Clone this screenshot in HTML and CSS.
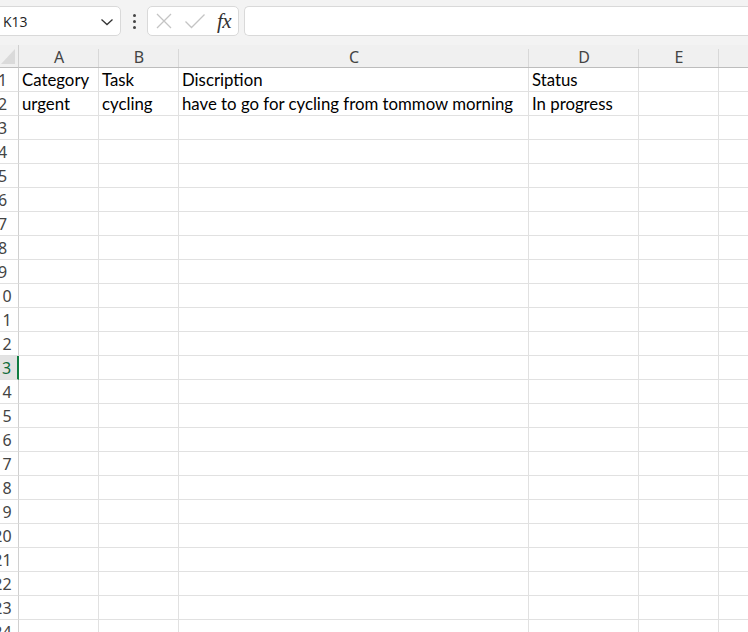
FILE: index.html
```html
<!DOCTYPE html>
<html>
<head>
<meta charset="utf-8">
<link rel="stylesheet" href="styles.css">
</head>
<body>
<div class="app">
  <div class="toolbar">
    <div class="namebox">
      <span class="name">K13</span>
      <svg class="chev" width="14" height="8" viewBox="0 0 14 8"><path d="M1.5 1.5 L7 6.5 L12.5 1.5" fill="none" stroke="#333" stroke-width="1.3"/></svg>
    </div>
    <div class="dots"><span></span><span></span><span></span></div>
    <div class="fxbox">
      <svg width="18" height="18" viewBox="0 0 18 18"><path d="M2 2 L16 16 M16 2 L2 16" stroke="#c4c4c4" stroke-width="1.3" fill="none"/></svg>
      <svg width="22" height="16" viewBox="0 0 22 16"><path d="M1.5 8.5 L7.5 14.5 L20.5 1.5" stroke="#c4c4c4" stroke-width="1.3" fill="none"/></svg>
      <span class="fx">fx</span>
    </div>
    <div class="formula"></div>
  </div>
  <div class="sheet">
    <div class="corner"><div class="tri"></div></div>
    <div class="ch">A</div><div class="ch">B</div><div class="ch">C</div><div class="ch">D</div><div class="ch">E</div><div class="ch last"></div>

    <div class="rh">1</div><div class="c">Category</div><div class="c">Task</div><div class="c">Discription</div><div class="c">Status</div><div class="c"></div><div class="c"></div>
    <div class="rh">2</div><div class="c">urgent</div><div class="c">cycling</div><div class="c">have to go for cycling from tommow morning</div><div class="c">In progress</div><div class="c"></div><div class="c"></div>
    <div class="rh">3</div><div class="c"></div><div class="c"></div><div class="c"></div><div class="c"></div><div class="c"></div><div class="c"></div>
    <div class="rh">4</div><div class="c"></div><div class="c"></div><div class="c"></div><div class="c"></div><div class="c"></div><div class="c"></div>
    <div class="rh">5</div><div class="c"></div><div class="c"></div><div class="c"></div><div class="c"></div><div class="c"></div><div class="c"></div>
    <div class="rh">6</div><div class="c"></div><div class="c"></div><div class="c"></div><div class="c"></div><div class="c"></div><div class="c"></div>
    <div class="rh">7</div><div class="c"></div><div class="c"></div><div class="c"></div><div class="c"></div><div class="c"></div><div class="c"></div>
    <div class="rh">8</div><div class="c"></div><div class="c"></div><div class="c"></div><div class="c"></div><div class="c"></div><div class="c"></div>
    <div class="rh">9</div><div class="c"></div><div class="c"></div><div class="c"></div><div class="c"></div><div class="c"></div><div class="c"></div>
    <div class="rh">10</div><div class="c"></div><div class="c"></div><div class="c"></div><div class="c"></div><div class="c"></div><div class="c"></div>
    <div class="rh">11</div><div class="c"></div><div class="c"></div><div class="c"></div><div class="c"></div><div class="c"></div><div class="c"></div>
    <div class="rh">12</div><div class="c"></div><div class="c"></div><div class="c"></div><div class="c"></div><div class="c"></div><div class="c"></div>
    <div class="rh sel">13</div><div class="c"></div><div class="c"></div><div class="c"></div><div class="c"></div><div class="c"></div><div class="c"></div>
    <div class="rh">14</div><div class="c"></div><div class="c"></div><div class="c"></div><div class="c"></div><div class="c"></div><div class="c"></div>
    <div class="rh">15</div><div class="c"></div><div class="c"></div><div class="c"></div><div class="c"></div><div class="c"></div><div class="c"></div>
    <div class="rh">16</div><div class="c"></div><div class="c"></div><div class="c"></div><div class="c"></div><div class="c"></div><div class="c"></div>
    <div class="rh">17</div><div class="c"></div><div class="c"></div><div class="c"></div><div class="c"></div><div class="c"></div><div class="c"></div>
    <div class="rh">18</div><div class="c"></div><div class="c"></div><div class="c"></div><div class="c"></div><div class="c"></div><div class="c"></div>
    <div class="rh">19</div><div class="c"></div><div class="c"></div><div class="c"></div><div class="c"></div><div class="c"></div><div class="c"></div>
    <div class="rh">20</div><div class="c"></div><div class="c"></div><div class="c"></div><div class="c"></div><div class="c"></div><div class="c"></div>
    <div class="rh">21</div><div class="c"></div><div class="c"></div><div class="c"></div><div class="c"></div><div class="c"></div><div class="c"></div>
    <div class="rh">22</div><div class="c"></div><div class="c"></div><div class="c"></div><div class="c"></div><div class="c"></div><div class="c"></div>
    <div class="rh">23</div><div class="c"></div><div class="c"></div><div class="c"></div><div class="c"></div><div class="c"></div><div class="c"></div>
    <div class="rh">24</div><div class="c"></div><div class="c"></div><div class="c"></div><div class="c"></div><div class="c"></div><div class="c"></div>
  </div>
</div>
</body>
</html>
```
FILE: styles.css
```css
html, body {
  margin: 0;
  padding: 0;
  width: 748px;
  height: 632px;
  overflow: hidden;
  background: #ffffff;
}
.app {
  width: 748px;
  height: 632px;
  overflow: hidden;
  background: #f3f3f3;
}
.toolbar {
  display: flex;
  align-items: center;
  height: 42px;
  box-sizing: border-box;
}
.namebox {
  margin-left: -10px;
  width: 131px;
  height: 30px;
  box-sizing: border-box;
  background: #fff;
  border: 1px solid #d9d9d9;
  border-radius: 5px;
  display: flex;
  align-items: center;
  justify-content: space-between;
  padding: 0 6px 0 12px;
}
.name {
  font-family: "Open Sans", "Noto Sans", sans-serif;
  font-size: 14px;
  color: #222;
}
.chev { margin-top: 1px; }
.dots {
  width: 26px;
  display: flex;
  flex-direction: column;
  align-items: center;
  gap: 3px;
}
.dots span {
  width: 3px;
  height: 3px;
  background: #444;
  border-radius: 50%;
}
.fxbox {
  width: 92px;
  height: 30px;
  box-sizing: border-box;
  background: #fff;
  border: 1px solid #d9d9d9;
  border-radius: 5px;
  display: flex;
  align-items: center;
  padding: 0 6px 0 7px;
  gap: 11px;
}
.fx {
  font-family: "Liberation Serif", "DejaVu Serif", serif;
  font-style: italic;
  font-size: 21px;
  color: #333;
  letter-spacing: -0.5px;
}
.formula {
  margin-left: 5px;
  flex: 1;
  height: 30px;
  background: #fff;
  border: 1px solid #d9d9d9;
  border-right: none;
  border-radius: 5px 0 0 5px;
  box-sizing: border-box;
}
.sheet {
  margin-top: 3px;
  margin-left: -13px;
  display: grid;
  grid-template-columns: 32px 80px 80px 350px 110px 80px 100px;
  grid-template-rows: 23px repeat(24, 24px);
  background: #fff;
}
.corner {
  background: #f0f0f0;
  border-right: 1px solid #d0d0d0;
  border-bottom: 1px solid #bdbdbd;
  box-sizing: border-box;
  display: flex;
  align-items: flex-end;
  justify-content: flex-end;
  padding: 0 3px 3px 0;
}
.tri {
  width: 0;
  height: 0;
  border-left: 14px solid transparent;
  border-bottom: 15px solid #dadada;
}
.ch {
  background: #f0f0f0;
  border-bottom: 1px solid #bdbdbd;
  box-sizing: border-box;
  font-family: "Noto Sans", "Open Sans", sans-serif;
  font-size: 16px;
  color: #444;
  display: flex;
  align-items: center;
  justify-content: center;
  padding-top: 2px;
  position: relative;
}
.ch::after {
  content: "";
  position: absolute;
  right: 0;
  top: 4px;
  bottom: 0;
  width: 1px;
  background: #d8d8d8;
}
.rh {
  background: #fff;
  border-right: 1px solid #d0d0d0;
  border-bottom: 1px solid #e1e1e1;
  box-sizing: border-box;
  font-family: "Noto Sans", "Open Sans", sans-serif;
  font-size: 16px;
  color: #444;
  display: flex;
  align-items: center;
  justify-content: center;
}
.rh.sel {
  background: #e3e3e3;
  color: #0f6b3a;
  border-right: 2px solid #107c41;
}
.c {
  border-right: 1px solid #e1e1e1;
  border-bottom: 1px solid #e1e1e1;
  box-sizing: border-box;
  font-family: "Lato", "Liberation Sans", sans-serif;
  font-size: 16.8px;
  color: #000;
  padding: 0 0 0 3px;
  display: flex;
  align-items: center;
  white-space: nowrap;
  overflow: visible;
}
```
